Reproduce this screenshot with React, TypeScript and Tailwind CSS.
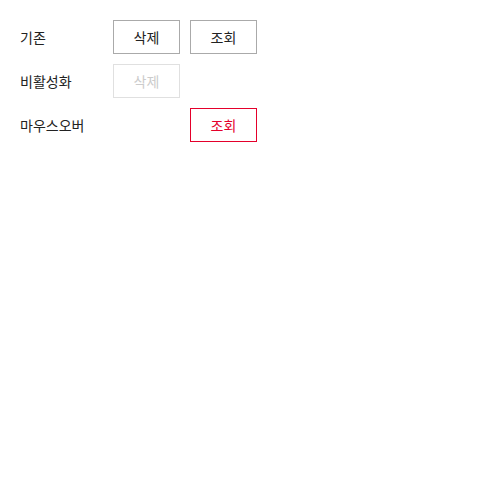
const Btn = ({
  label,
  variant = "default",
}: {
  label: string;
  variant?: "default" | "disabled" | "hover";
}) => {
  const styles = {
    default: "border-[#aaaaaa] text-[#222222]",
    disabled: "border-[#e0e0e0] text-[#cccccc]",
    hover: "border-[#e4002b] text-[#e4002b]",
  };
  return (
    <button
      type="button"
      disabled={variant === "disabled"}
      className={`flex h-[34px] w-[67px] items-center justify-center border bg-white text-[14px] ${styles[variant]}`}
    >
      {label}
    </button>
  );
};

export default function App() {
  return (
    <div
      className="flex flex-col gap-[10px] bg-white p-[20px]"
      style={{ fontFamily: '"Noto Sans CJK KR", "Noto Sans", sans-serif' }}
    >
      <div className="flex items-center">
        <span className="w-[93px] text-[14px] text-[#222222]">기존</span>
        <div className="flex gap-[10px]">
          <Btn label="삭제" />
          <Btn label="조회" />
        </div>
      </div>
      <div className="flex items-center">
        <span className="w-[93px] text-[14px] text-[#222222]">비활성화</span>
        <div className="flex gap-[10px]">
          <Btn label="삭제" variant="disabled" />
        </div>
      </div>
      <div className="flex items-center">
        <span className="w-[93px] text-[14px] text-[#222222]">마우스오버</span>
        <div className="flex gap-[10px]">
          <div className="w-[67px]" />
          <Btn label="조회" variant="hover" />
        </div>
      </div>
    </div>
  );
}
